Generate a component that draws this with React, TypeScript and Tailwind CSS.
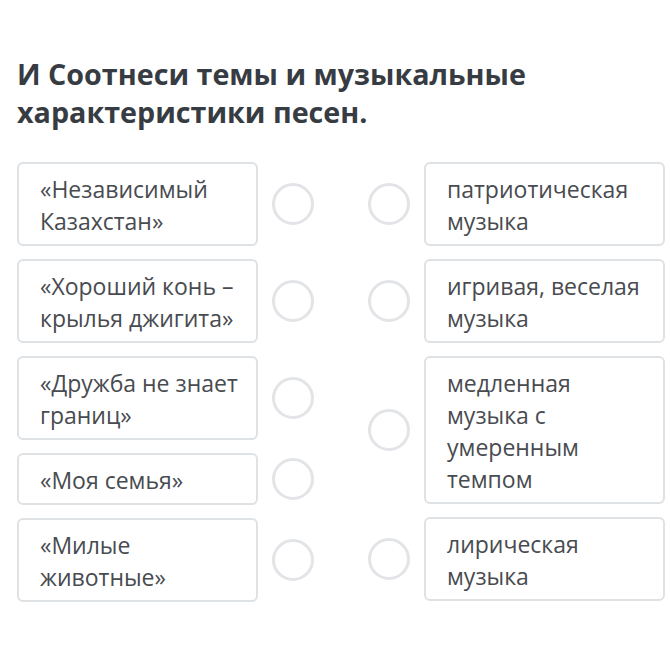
import React from 'react';

const left = [
  { text: '«Независимый Казахстан»' },
  { text: '«Хороший конь – крылья джигита»' },
  { text: '«Дружба не знает границ»' },
  { text: '«Моя семья»' },
  { text: '«Милые животные»' },
];

const right = [
  { text: 'патриотическая музыка' },
  { text: 'игривая, веселая музыка' },
  { text: 'медленная музыка с умеренным темпом' },
  { text: 'лирическая музыка' },
];

function Dot() {
  return <div className="w-[42px] h-[42px] shrink-0 rounded-full border-[3px] border-[#e2e4e7] bg-white" />;
}

function Card({ text }: { text: string }) {
  return (
    <div className="w-[241px] shrink-0 rounded-[6px] border-2 border-[#dfe2e5] bg-white pl-[21px] pr-[15px] pt-[9px] pb-[7px] text-[23px] leading-[32px] text-[#484b50]">
      {text}
    </div>
  );
}

export default function App() {
  return (
    <div className="min-h-[668px] bg-white px-[17px] pt-[55px] font-['Open_Sans',sans-serif]">
      <h1 className="text-[28.7px] leading-[38px] font-bold text-[#373c43] max-w-[580px]">
        И Соотнеси темы и музыкальные характеристики песен.
      </h1>

      <div className="mt-[31px] flex">
        <div className="flex flex-col gap-[13px]">
          {left.map((item) => (
            <div key={item.text} className="flex items-center gap-[14px]">
              <Card text={item.text} />
              <Dot />
            </div>
          ))}
        </div>
        <div className="ml-[54px] flex flex-col gap-[13px]">
          {right.map((item) => (
            <div key={item.text} className="flex items-center gap-[14px]">
              <Dot />
              <Card text={item.text} />
            </div>
          ))}
        </div>
      </div>
    </div>
  );
}
